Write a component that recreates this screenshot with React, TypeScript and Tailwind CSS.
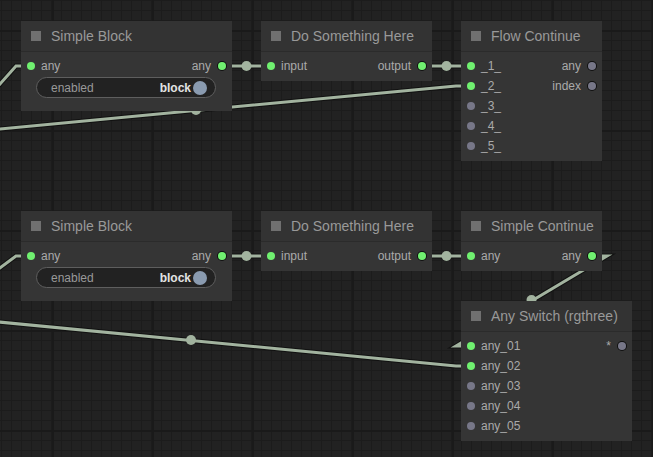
import clsx from "clsx";

type Slot = { label: string; on?: boolean };

const LINK = "#a2b39f";

function Dot({ on, out }: { on?: boolean; out?: boolean }) {
  return (
    <span
      className={clsx(
        "block h-2 w-2 shrink-0 rounded-full",
        on ? "bg-[#70f070]" : "bg-[#777788]",
        out && "ring-1 ring-[#111]"
      )}
    />
  );
}

function Toggle() {
  return (
    <div className="mt-px ml-[15px] mr-[16px] flex h-[21px] items-center rounded-full border border-[#5e5e5e] bg-[#222] pl-[14px] pr-[8px] text-[12px] leading-none">
      <span className="flex-1 text-[#999]">enabled</span>
      <span className="font-bold text-[#e2e2e2]">block</span>
      <span className="ml-[2px] block h-[14px] w-[14px] rounded-full bg-[#8a9bb0]" />
    </div>
  );
}

function Node({
  pos,
  title,
  inputs,
  outputs,
  widget,
}: {
  pos: string;
  title: string;
  inputs: Slot[];
  outputs: Slot[];
  widget?: boolean;
}) {
  const rows = Math.max(inputs.length, outputs.length);
  return (
    <div className={clsx("absolute bg-[#353535]", pos, widget ? "pb-[13px]" : "pb-[5px]")}>
      <div className="flex h-[31px] items-center gap-[10px] border-b border-[#2b2b2b] bg-[#333] pl-[10px]">
        <span className="block h-[10px] w-[10px] bg-[#707070]" />
        <span className="text-[14px] leading-none text-[#999]">{title}</span>
      </div>
      <div className="pt-[4px]">
        {Array.from({ length: rows }).map((_, i) => (
          <div key={i} className="flex h-5 items-center justify-between px-[6px] text-[12px] leading-none text-[#aaa]">
            <div className="flex items-center gap-[6px]">
              {inputs[i] && (
                <>
                  <Dot on={inputs[i].on} />
                  <span>{inputs[i].label}</span>
                </>
              )}
            </div>
            <div className="flex items-center gap-[7px]">
              {outputs[i] && (
                <>
                  <span>{outputs[i].label}</span>
                  <Dot on={outputs[i].on} out />
                </>
              )}
            </div>
          </div>
        ))}
        {widget && <Toggle />}
      </div>
    </div>
  );
}

// linear links: each is a list of points + the centre marker
const links: { pts: [number, number][]; mid?: [number, number] }[] = [
  { pts: [[-30, 118], [16, 66], [31, 66]] },
  { pts: [[222, 66], [271, 66]], mid: [246.5, 66] },
  { pts: [[422, 66], [471, 66]], mid: [446.5, 66] },
  { pts: [[-79, 135], [-64, 135], [456, 86], [471, 86]], mid: [196, 110] },
  { pts: [[-30, 290], [16, 256], [31, 256]] },
  { pts: [[222, 256], [271, 256]], mid: [246.5, 256] },
  { pts: [[422, 256], [471, 256]], mid: [446.5, 256] },
  { pts: [[592, 256], [607, 256], [456, 346], [471, 346]], mid: [531.5, 300] },
  { pts: [[-89, 315], [-74, 315], [456, 366], [471, 366]], mid: [191, 340] },
];

function Links() {
  return (
    <svg className="absolute inset-0 h-full w-full" width={653} height={457}>
      {links.map((l, i) => {
        const d = l.pts.map((p) => p.join(",")).join(" ");
        return (
          <g key={i}>
            <polyline points={d} fill="none" stroke="#111" strokeWidth={5} strokeLinejoin="miter" />
            <polyline points={d} fill="none" stroke={LINK} strokeWidth={3} strokeLinejoin="miter" />
            {l.mid && <circle cx={l.mid[0]} cy={l.mid[1]} r={5} fill={LINK} />}
          </g>
        );
      })}
    </svg>
  );
}

export default function App() {
  return (
    <div className="relative h-[457px] w-[653px] overflow-hidden bg-[#222] bg-[linear-gradient(to_right,#1a1a1a_2px,transparent_2px),linear-gradient(to_bottom,#1a1a1a_2px,transparent_2px),linear-gradient(to_right,#1c1c1c_1px,transparent_1px),linear-gradient(to_bottom,#1c1c1c_1px,transparent_1px)] bg-[size:100px_100px,100px_100px,10px_10px,10px_10px] bg-[position:52px_30px,52px_30px,1px_0px,1px_0px] font-['Liberation_Sans',Arial,sans-serif]">
      <Links />

      <Node
        pos="left-[21px] top-[21px] w-[211px]"
        title="Simple Block"
        inputs={[{ label: "any", on: true }]}
        outputs={[{ label: "any", on: true }]}
        widget
      />
      <Node
        pos="left-[261px] top-[21px] w-[171px]"
        title="Do Something Here"
        inputs={[{ label: "input", on: true }]}
        outputs={[{ label: "output", on: true }]}
      />
      <Node
        pos="left-[461px] top-[21px] w-[141px]"
        title="Flow Continue"
        inputs={[
          { label: "_1_", on: true },
          { label: "_2_", on: true },
          { label: "_3_" },
          { label: "_4_" },
          { label: "_5_" },
        ]}
        outputs={[{ label: "any" }, { label: "index" }]}
      />

      <Node
        pos="left-[21px] top-[211px] w-[211px]"
        title="Simple Block"
        inputs={[{ label: "any", on: true }]}
        outputs={[{ label: "any", on: true }]}
        widget
      />
      <Node
        pos="left-[261px] top-[211px] w-[171px]"
        title="Do Something Here"
        inputs={[{ label: "input", on: true }]}
        outputs={[{ label: "output", on: true }]}
      />
      <Node
        pos="left-[461px] top-[211px] w-[141px]"
        title="Simple Continue"
        inputs={[{ label: "any", on: true }]}
        outputs={[{ label: "any", on: true }]}
      />
      <Node
        pos="left-[461px] top-[301px] w-[171px]"
        title="Any Switch (rgthree)"
        inputs={[
          { label: "any_01", on: true },
          { label: "any_02", on: true },
          { label: "any_03" },
          { label: "any_04" },
          { label: "any_05" },
        ]}
        outputs={[{ label: "*" }]}
      />
    </div>
  );
}
